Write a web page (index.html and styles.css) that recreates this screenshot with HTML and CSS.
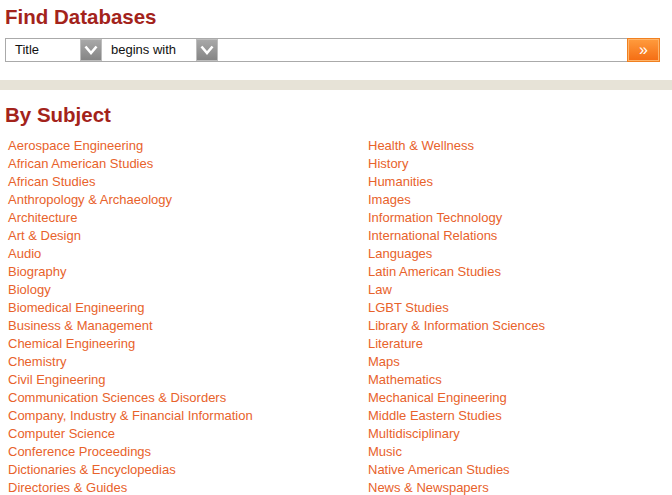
FILE: index.html
```html
<!DOCTYPE html>
<html>
<head>
<meta charset="utf-8">
<link rel="stylesheet" href="styles.css">
</head>
<body>
<section class="find">
  <h1 class="title">Find Databases</h1>
  <form class="search">
    <div class="box">
      <div class="sel sel-field"><span class="sel-text">Title</span><span class="arrow"><svg width="14" height="10" viewBox="0 0 14 10"><path d="M1.5 1.5 L7 8 L12.5 1.5" fill="none" stroke="#fff" stroke-width="2.6"/></svg></span></div>
      <div class="sel sel-op"><span class="sel-text">begins with</span><span class="arrow"><svg width="14" height="10" viewBox="0 0 14 10"><path d="M1.5 1.5 L7 8 L12.5 1.5" fill="none" stroke="#fff" stroke-width="2.6"/></svg></span></div>
      <div class="query"></div>
    </div>
    <button type="button" class="go"><span>&raquo;</span></button>
  </form>
</section>
<div class="band"></div>
<section class="subjects">
  <h2 class="title">By Subject</h2>
  <div class="cols">
    <ul class="list">
      <li><a href="#">Aerospace Engineering</a></li>
      <li><a href="#">African American Studies</a></li>
      <li><a href="#">African Studies</a></li>
      <li><a href="#">Anthropology &amp; Archaeology</a></li>
      <li><a href="#">Architecture</a></li>
      <li><a href="#">Art &amp; Design</a></li>
      <li><a href="#">Audio</a></li>
      <li><a href="#">Biography</a></li>
      <li><a href="#">Biology</a></li>
      <li><a href="#">Biomedical Engineering</a></li>
      <li><a href="#">Business &amp; Management</a></li>
      <li><a href="#">Chemical Engineering</a></li>
      <li><a href="#">Chemistry</a></li>
      <li><a href="#">Civil Engineering</a></li>
      <li><a href="#">Communication Sciences &amp; Disorders</a></li>
      <li><a href="#">Company, Industry &amp; Financial Information</a></li>
      <li><a href="#">Computer Science</a></li>
      <li><a href="#">Conference Proceedings</a></li>
      <li><a href="#">Dictionaries &amp; Encyclopedias</a></li>
      <li><a href="#">Directories &amp; Guides</a></li>
    </ul>
    <ul class="list">
      <li><a href="#">Health &amp; Wellness</a></li>
      <li><a href="#">History</a></li>
      <li><a href="#">Humanities</a></li>
      <li><a href="#">Images</a></li>
      <li><a href="#">Information Technology</a></li>
      <li><a href="#">International Relations</a></li>
      <li><a href="#">Languages</a></li>
      <li><a href="#">Latin American Studies</a></li>
      <li><a href="#">Law</a></li>
      <li><a href="#">LGBT Studies</a></li>
      <li><a href="#">Library &amp; Information Sciences</a></li>
      <li><a href="#">Literature</a></li>
      <li><a href="#">Maps</a></li>
      <li><a href="#">Mathematics</a></li>
      <li><a href="#">Mechanical Engineering</a></li>
      <li><a href="#">Middle Eastern Studies</a></li>
      <li><a href="#">Multidisciplinary</a></li>
      <li><a href="#">Music</a></li>
      <li><a href="#">Native American Studies</a></li>
      <li><a href="#">News &amp; Newspapers</a></li>
    </ul>
  </div>
</section>
</body>
</html>
```
FILE: styles.css
```css
html, body {
  margin: 0;
  padding: 0;
  background: #fff;
  font-family: "Liberation Sans", Arial, sans-serif;
  overflow: hidden;
}
.title {
  margin: 0;
  font-size: 20.5px;
  font-weight: bold;
  color: #a3231b;
  line-height: 24px;
}
.find {
  padding: 5px 12px 0 5px;
}
.search {
  display: flex;
  margin: 9px 0 0 0;
  height: 24px;
}
.box {
  flex: 1;
  display: flex;
  border: 1px solid #aaa;
  border-right: none;
  height: 22px;
  background: #fff;
}
.sel {
  display: flex;
  align-items: stretch;
  font-size: 13px;
  color: #111;
}
.sel-field { width: 96px; }
.sel-op { width: 116px; }
.sel-text {
  flex: 1;
  padding-left: 9px;
  line-height: 22px;
}
.arrow {
  width: 20px;
  border: 1px solid #bdbdbd;
  background: linear-gradient(#a8a8a8, #858585);
  display: flex;
  align-items: center;
  justify-content: center;
}
.query { flex: 1; }
.go {
  width: 33px;
  height: 24px;
  margin: 0;
  padding: 0;
  border: 1px solid #f08020;
  background: linear-gradient(#ff9c3e, #f46c12);
  box-shadow: inset 0 0 0 1px #ffb46a;
  color: #fff;
  font-family: "Liberation Sans", Arial, sans-serif;
  font-size: 16px;
  font-weight: normal;
  line-height: 20px;
  display: flex;
  align-items: center;
  justify-content: center;
}
.band {
  margin-top: 18px;
  height: 10px;
  background: #e7e3d7;
}
.subjects {
  padding: 13px 5px 0 5px;
}
.cols {
  display: grid;
  grid-template-columns: 360px 1fr;
  padding: 10px 0 0 3px;
}
.list {
  list-style: none;
  margin: 0;
  padding: 0;
}
.list li {
  font-size: 13px;
  line-height: 18px;
}
.list a {
  color: #e8622b;
  text-decoration: none;
}
```
